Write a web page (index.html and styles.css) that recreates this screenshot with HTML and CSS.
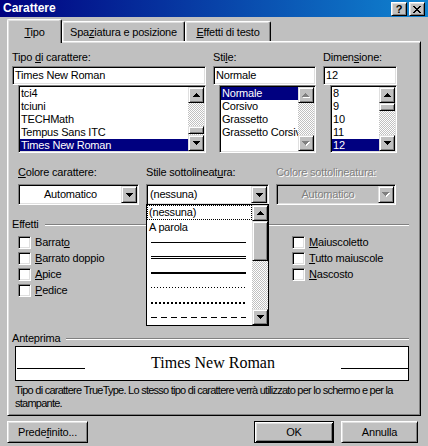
FILE: index.html
```html
<!DOCTYPE html>
<html lang="it">
<head>
<meta charset="utf-8">
<title>Carattere</title>
<link rel="stylesheet" href="styles.css">
</head>
<body>
<div class="window">
  <div class="titlebar">
    <span class="title">Carattere</span>
    <div class="caption-btns">
      <span class="cbtn">?</span>
      <span class="cbtn"><svg class="px" width="8" height="7" viewBox="0 0 8 7"><path d="M0 0h2v1H0zM6 0h2v1H6zM1 1h2v1H1zM5 1h2v1H5zM2 2h4v1H2zM3 3h2v1H3zM2 4h4v1H2zM1 5h2v1H1zM5 5h2v1H5zM0 6h2v1H0zM6 6h2v1H6z"/></svg></span>
    </div>
  </div>
  <div class="dialog">
    <div class="tabs">
      <div class="tab active"><u>T</u>ipo</div>
      <div class="tab tab-spacing">Spa<u>z</u>iatura e posizione</div>
      <div class="tab tab-effects"><u>E</u>ffetti di testo</div>
    </div>
    <div class="panel">
      <div class="font-row">
        <div class="col col-name">
          <div class="lbl">Tipo <u>d</u>i carattere:</div>
          <div class="field">Times New Roman</div>
          <div class="list">
            <div class="items">
              <div class="item">tci4</div>
              <div class="item">tciuni</div>
              <div class="item">TECHMath</div>
              <div class="item">Tempus Sans ITC</div>
              <div class="item sel">Times New Roman</div>
            </div>
            <div class="vscroll">
              <div class="sbtn"><svg class="px" width="7" height="4" viewBox="0 0 7 4"><path d="M3 0h1v1H3zM2 1h3v1H2zM1 2h5v1H1zM0 3h7v1H0z"/></svg></div>
              <div class="track"><div class="thumb thumb-end"></div></div>
              <div class="sbtn"><svg class="px" width="7" height="4" viewBox="0 0 7 4"><path d="M0 0h7v1H0zM1 1h5v1H1zM2 2h3v1H2zM3 3h1v1H3z"/></svg></div>
            </div>
          </div>
        </div>
        <div class="col col-style">
          <div class="lbl">Sti<u>l</u>e:</div>
          <div class="field">Normale</div>
          <div class="list">
            <div class="items">
              <div class="item sel">Normale</div>
              <div class="item">Corsivo</div>
              <div class="item">Grassetto</div>
              <div class="item">Grassetto Corsivo</div>
            </div>
            <div class="vscroll">
              <div class="sbtn"><svg class="px" width="8" height="5" viewBox="0 0 8 5"><path class="hi" d="M4 1h1v1H4zM3 2h3v1H3zM2 3h5v1H2zM1 4h7v1H1z"/><path class="lo" d="M3 0h1v1H3zM2 1h3v1H2zM1 2h5v1H1zM0 3h7v1H0z"/></svg></div>
              <div class="track"></div>
              <div class="sbtn"><svg class="px" width="8" height="5" viewBox="0 0 8 5"><path class="hi" d="M1 1h7v1H1zM2 2h5v1H2zM3 3h3v1H3zM4 4h1v1H4z"/><path class="lo" d="M0 0h7v1H0zM1 1h5v1H1zM2 2h3v1H2zM3 3h1v1H3z"/></svg></div>
            </div>
          </div>
        </div>
        <div class="col col-size">
          <div class="lbl">Dimen<u>s</u>ione:</div>
          <div class="field">12</div>
          <div class="list">
            <div class="items">
              <div class="item">8</div>
              <div class="item">9</div>
              <div class="item">10</div>
              <div class="item">11</div>
              <div class="item sel">12</div>
            </div>
            <div class="vscroll">
              <div class="sbtn"><svg class="px" width="7" height="4" viewBox="0 0 7 4"><path d="M3 0h1v1H3zM2 1h3v1H2zM1 2h5v1H1zM0 3h7v1H0z"/></svg></div>
              <div class="track"><div class="thumb"></div></div>
              <div class="sbtn"><svg class="px" width="7" height="4" viewBox="0 0 7 4"><path d="M0 0h7v1H0zM1 1h5v1H1zM2 2h3v1H2zM3 3h1v1H3z"/></svg></div>
            </div>
          </div>
        </div>
      </div>

      <div class="color-row">
        <div class="ccol ccol-font">
          <div class="lbl"><u>C</u>olore carattere:</div>
          <div class="combo">
            <div class="combo-text centered">Automatico</div>
            <div class="sbtn dbtn"><svg class="px" width="7" height="4" viewBox="0 0 7 4"><path d="M0 0h7v1H0zM1 1h5v1H1zM2 2h3v1H2zM3 3h1v1H3z"/></svg></div>
          </div>
        </div>
        <div class="ccol ccol-under">
          <div class="lbl">Stile sottolineat<u>u</u>ra:</div>
          <div class="combo-wrap">
            <div class="combo">
              <div class="combo-text">(nessuna)</div>
              <div class="sbtn dbtn"><svg class="px" width="7" height="4" viewBox="0 0 7 4"><path d="M0 0h7v1H0zM1 1h5v1H1zM2 2h3v1H2zM3 3h1v1H3z"/></svg></div>
            </div>
            <div class="droplist">
              <div class="ditems">
                <div class="ditem focus">(nessuna)</div>
                <div class="ditem">A parola</div>
                <div class="ditem"><span class="uline ul-solid"></span></div>
                <div class="ditem"><span class="uline ul-double"></span></div>
                <div class="ditem"><span class="uline ul-thick"></span></div>
                <div class="ditem"><span class="uline ul-dot"></span></div>
                <div class="ditem"><span class="uline ul-dot-heavy"></span></div>
                <div class="ditem"><span class="uline ul-dash"></span></div>
              </div>
              <div class="vscroll">
                <div class="sbtn"><svg class="px" width="7" height="4" viewBox="0 0 7 4"><path d="M3 0h1v1H3zM2 1h3v1H2zM1 2h5v1H1zM0 3h7v1H0z"/></svg></div>
                <div class="track"><div class="thumb thumb-long"></div></div>
                <div class="sbtn"><svg class="px" width="7" height="4" viewBox="0 0 7 4"><path d="M0 0h7v1H0zM1 1h5v1H1zM2 2h3v1H2zM3 3h1v1H3z"/></svg></div>
              </div>
            </div>
          </div>
        </div>
        <div class="ccol ccol-ucolor">
          <div class="lbl disabled">Colore sottolineatura:</div>
          <div class="combo combo-disabled">
            <div class="combo-text centered">Automatico</div>
            <div class="sbtn dbtn"><svg class="px" width="8" height="5" viewBox="0 0 8 5"><path class="hi" d="M1 1h7v1H1zM2 2h5v1H2zM3 3h3v1H3zM4 4h1v1H4z"/><path class="lo" d="M0 0h7v1H0zM1 1h5v1H1zM2 2h3v1H2zM3 3h1v1H3z"/></svg></div>
          </div>
        </div>
      </div>

      <div class="group-head"><span>Effetti</span><div class="etch"></div></div>
      <div class="checks">
        <div class="chk-col chk-left">
          <div class="chk"><span class="box"></span><span>Barrat<u>o</u></span></div>
          <div class="chk"><span class="box"></span><span><u>B</u>arrato doppio</span></div>
          <div class="chk"><span class="box"></span><span><u>A</u>pice</span></div>
          <div class="chk"><span class="box"></span><span><u>P</u>edice</span></div>
        </div>
        <div class="chk-col">
          <div class="chk"><span class="box"></span><span><u>M</u>aiuscoletto</span></div>
          <div class="chk"><span class="box"></span><span><u>T</u>utto maiuscole</span></div>
          <div class="chk"><span class="box"></span><span><u>N</u>ascosto</span></div>
        </div>
      </div>

      <div class="group-head preview-head"><span>Anteprima</span><div class="etch"></div></div>
      <div class="preview">
        <span class="pline pline-left"></span>
        <span class="ptext">Times New Roman</span>
        <span class="pline pline-right"></span>
      </div>
      <div class="desc">Tipo di carattere TrueType. Lo stesso tipo di carattere verrà utilizzato per lo schermo e per la<br>stampante.</div>
    </div>

    <div class="buttons">
      <div class="btn btn-default-set">Prede<u>f</u>inito...</div>
      <div class="btn btn-ok">OK</div>
      <div class="btn btn-cancel">Annulla</div>
    </div>
  </div>
</div>
</body>
</html>
```

FILE: styles.css
```css
* { box-sizing: border-box; }
html, body { margin: 0; padding: 0; }
body {
  width: 428px;
  height: 446px;
  overflow: hidden;
  background: #c0c0c0;
  font-family: "Liberation Sans", Arial, sans-serif;
  font-size: 11px;
  line-height: 13px;
  letter-spacing: -0.2px;
  color: #000;
}
u { text-decoration: underline; text-underline-offset: 1px; }
.px { display: block; shape-rendering: crispEdges; fill: #000; }
.px .hi { fill: #fff; }
.px .lo { fill: #808080; }

.window {
  width: 428px;
  height: 446px;
  display: flex;
  flex-direction: column;
  background: #c0c0c0;
}

/* title bar */
.titlebar {
  height: 17px;
  flex: none;
  display: flex;
  align-items: center;
  justify-content: space-between;
  padding: 0 3px 0 3px;
  background: linear-gradient(to right, #000080, #1084d0);
  color: #fff;
}
.title { font-weight: bold; font-size: 12px; letter-spacing: 0; line-height: 17px; }
.caption-btns { display: flex; gap: 2px; align-self: flex-start; margin-top: 2px; }
.cbtn {
  width: 16px;
  height: 14px;
  display: flex;
  align-items: center;
  justify-content: center;
  background: #c0c0c0;
  color: #000;
  font-weight: bold;
  font-size: 11px;
  line-height: 12px;
  border: 1px solid;
  border-color: #fff #000 #000 #fff;
  box-shadow: inset 1px 1px #dfdfdf, inset -1px -1px #808080;
}

/* dialog body */
.dialog { padding: 0 7px; flex: 1; display: flex; flex-direction: column; }
.tabs { display: flex; align-items: flex-end; padding-top: 2px; height: 24px; flex: none; }
.tab {
  height: 20px;
  padding-top: 4px;
  text-align: center;
  background: #c0c0c0;
  border-left: 1px solid #fff;
  border-top: 1px solid #fff;
  border-right: 1px solid #000;
  border-top-left-radius: 2px;
  border-top-right-radius: 2px;
  box-shadow: inset -1px 0 #808080, inset 1px 1px #dfdfdf;
  white-space: nowrap;
}
.tab.active {
  width: 55px;
  height: 24px;
  padding-top: 6px;
  margin-bottom: -2px;
  position: relative;
  z-index: 2;
  box-shadow: inset -1px 0 #808080, inset 1px 1px #dfdfdf;
}
.tab-spacing { width: 123px; }
.tab-effects { width: 86px; }

.panel {
  width: 414px;
  height: 375px;
  flex: none;
  padding: 9px 11px 0 4px;
  border: 1px solid;
  border-color: #fff #000 #000 #fff;
  box-shadow: inset 1px 1px #dfdfdf, inset -1px -1px #808080;
  display: flex;
  flex-direction: column;
}

.lbl { height: 13px; white-space: nowrap; }
.lbl.disabled { color: #808080; text-shadow: 1px 1px #fff; }

/* font row */
.font-row { display: flex; gap: 7px; }
.col { display: flex; flex-direction: column; }
.col .lbl { margin-bottom: 2px; }
.col-name { width: 194px; }
.col-style { width: 103px; }
.col-size { width: 74px; }

.field {
  height: 19px;
  padding: 1px 2px;
  line-height: 15px;
  background: #fff;
  border: 1px solid;
  border-color: #808080 #fff #fff #808080;
  box-shadow: inset 1px 1px #000, inset -1px -1px #dfdfdf;
  white-space: nowrap;
  overflow: hidden;
}

.list {
  display: flex;
  height: 68px;
  padding: 1px;
  background: #fff;
  border: 1px solid;
  border-color: #808080 #fff #fff #808080;
  box-shadow: inset 1px 1px #000, inset -1px -1px #dfdfdf;
}
.col-name .list { margin-left: 6px; }
.col-style .list { margin-left: 6px; }
.col-size .list { margin-left: 7px; }
.items { flex: 1; min-width: 0; overflow: hidden; }
.item { height: 13px; line-height: 13px; padding-left: 1px; white-space: nowrap; overflow: hidden; }
.item.sel { background: #000080; color: #fff; }

.vscroll { width: 16px; flex: none; display: flex; flex-direction: column; }
.sbtn {
  width: 16px;
  height: 16px;
  flex: none;
  display: flex;
  align-items: center;
  justify-content: center;
  background: #c0c0c0;
  border: 1px solid;
  border-color: #dfdfdf #000 #000 #dfdfdf;
  box-shadow: inset 1px 1px #fff, inset -1px -1px #808080;
}
.track {
  flex: 1;
  display: flex;
  flex-direction: column;
  background-color: #fff;
  background-image: repeating-conic-gradient(#c0c0c0 0% 25%, #fff 0% 50%);
  background-size: 2px 2px;
}
.thumb {
  height: 8px;
  flex: none;
  background: #c0c0c0;
  border: 1px solid;
  border-color: #dfdfdf #000 #000 #dfdfdf;
  box-shadow: inset 1px 1px #fff, inset -1px -1px #808080;
}
.thumb-end { margin-top: auto; margin-bottom: 1px; }
.thumb-long { height: 40px; }

/* color row */
.color-row { display: flex; gap: 7px; margin-top: 13px; padding-left: 6px; }
.ccol { display: flex; flex-direction: column; }
.ccol .lbl { margin-bottom: 5px; }
.ccol-font { width: 121px; }
.ccol-under { width: 123px; }
.ccol-ucolor { width: 120px; }
.combo-wrap { position: relative; }
.combo {
  display: flex;
  height: 21px;
  padding: 1px;
  background: #fff;
  border: 1px solid;
  border-color: #808080 #fff #fff #808080;
  box-shadow: inset 1px 1px #000, inset -1px -1px #dfdfdf;
}
.combo-text { flex: 1; line-height: 17px; padding-left: 2px; white-space: nowrap; }
.combo-text.centered { text-align: center; padding-left: 0; }
.dbtn { height: 17px; }
.combo-disabled { background: #c0c0c0; }
.combo-disabled .combo-text { color: #808080; text-shadow: 1px 1px #fff; }

.droplist {
  position: absolute;
  top: 20px;
  left: 0;
  width: 123px;
  height: 122px;
  z-index: 5;
  display: flex;
  background: #fff;
  border: 1px solid #000;
}
.ditems { flex: 1; }
.ditem {
  height: 15px;
  line-height: 15px;
  padding-left: 2px;
  display: flex;
  align-items: center;
  white-space: nowrap;
}
.ditem.focus { outline: 1px dotted #000; outline-offset: -1px; }
.uline { display: block; width: 95px; margin-left: 2px; }
.ul-solid { height: 1px; background: #000; }
.ul-double { height: 3px; border-top: 1px solid #000; border-bottom: 1px solid #000; }
.ul-thick { height: 2px; background: #000; }
.ul-dot { height: 1px; background: repeating-linear-gradient(to right, #000 0 1px, transparent 1px 3px); }
.ul-dot-heavy { height: 2px; background: repeating-linear-gradient(to right, #000 0 2px, transparent 2px 4px); }
.ul-dash { height: 1px; background: repeating-linear-gradient(to right, #000 0 6px, transparent 6px 10px); }

/* group headers */
.group-head { display: flex; align-items: center; gap: 6px; margin-top: 13px; height: 13px; }
.etch { flex: 1; height: 2px; border-top: 1px solid #808080; border-bottom: 1px solid #fff; }
.preview-head { margin-top: 33px; }

/* checkboxes */
.checks { display: flex; padding-left: 6px; margin-top: 4px; }
.chk-col { display: flex; flex-direction: column; }
.chk-left { width: 274px; }
.chk { height: 16px; display: flex; align-items: flex-start; gap: 4px; padding-top: 1px; white-space: nowrap; }
.box {
  width: 13px;
  height: 13px;
  flex: none;
  background: #fff;
  border: 1px solid;
  border-color: #808080 #fff #fff #808080;
  box-shadow: inset 1px 1px #000, inset -1px -1px #dfdfdf;
}

/* preview */
.preview {
  margin: 1px 0 0 3px;
  width: 394px;
  height: 35px;
  background: #fff;
  border: 1px solid #000;
  display: flex;
  align-items: flex-start;
  justify-content: space-between;
  padding-top: 7px;
}
.pline { display: block; height: 1px; background: #000; margin-top: 14px; }
.pline-left { width: 68px; margin-left: 1px; }
.pline-right { width: 67px; }
.ptext { font-family: "Liberation Sans", Arial, sans-serif; font-family: "Liberation Serif", "Times New Roman", serif; font-size: 16px; line-height: 18px; letter-spacing: 0; }
.desc { margin: 3px 0 0 3px; white-space: nowrap; letter-spacing: -0.75px; }

/* buttons */
.buttons { display: flex; margin-top: 5px; padding-right: 3px; }
.btn {
  height: 22px;
  display: flex;
  align-items: center;
  justify-content: center;
  border: 1px solid;
  border-color: #fff #000 #000 #fff;
  box-shadow: inset 1px 1px #dfdfdf, inset -1px -1px #808080;
  white-space: nowrap;
}
.btn-default-set { width: 81px; }
.btn-ok {
  width: 80px;
  margin-left: auto;
  border-color: #000;
  box-shadow: inset 1px 1px #fff, inset -1px -1px #000, inset 2px 2px #dfdfdf, inset -2px -2px #808080;
}
.btn-cancel { width: 77px; margin-left: 7px; }
```
